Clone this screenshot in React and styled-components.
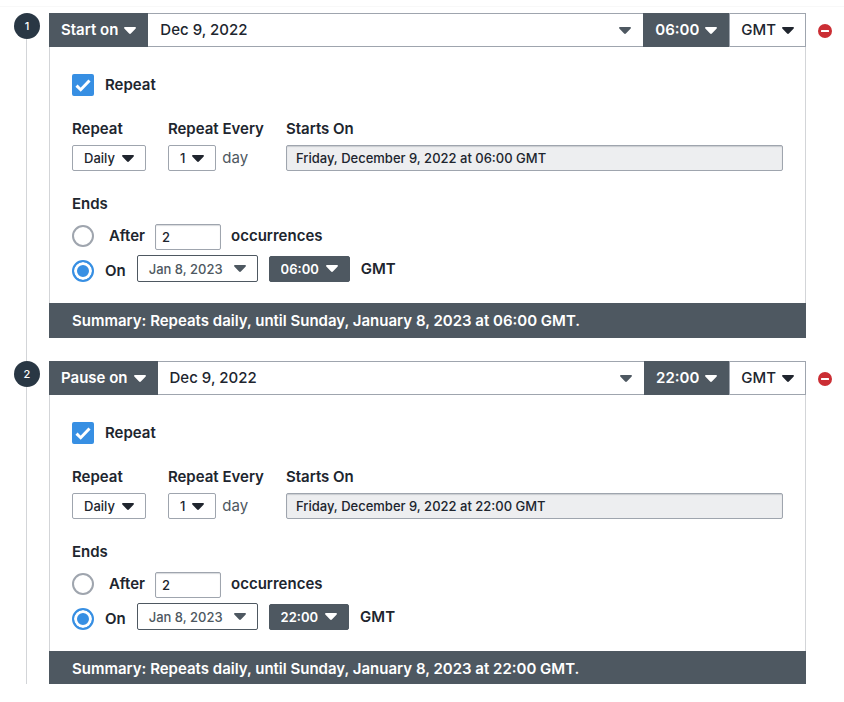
import React, { useId, useState } from "react";
import styled, { createGlobalStyle, css } from "styled-components";

const slate = "#4e5861";
const ink = "#20252e";
const line = "#9fa5ae";
const blue = "#378fe3";

const GlobalStyle = createGlobalStyle`
  *, *::before, *::after { box-sizing: border-box; }
  body {
    margin: 0;
    background: #fff;
    color: ${ink};
    font-family: Inter, "Liberation Sans", sans-serif;
    font-size: 15px;
    font-weight: 600;
    line-height: 22px;
  }
  button, input, select { font: inherit; color: inherit; margin: 0; }
`;

const Page = styled.main`
  height: calc(100vh - 18px);
  padding-top: 6px;
  overflow: hidden;
`;

const Steps = styled.ol`
  list-style: none;
  margin: 0;
  padding: 6px 12px 0 14px;
  border-top: 1px solid #f8f8f8;
`;

const StepItem = styled.li`
  display: flex;
`;

const Rail = styled.div`
  display: flex;
  flex-direction: column;
  align-items: center;
  width: 26px;
  margin-right: 9px;

  &::after {
    content: "";
    flex: 1;
    width: 1px;
    margin-right: 1px;
    background: #d3d5d8;
  }
`;

const StepNumber = styled.span`
  width: 26px;
  height: 26px;
  border-radius: 50%;
  background: #293744;
  color: #fff;
  font-size: 11px;
  font-weight: 500;
  line-height: 26px;
  text-align: center;
`;

const Card = styled.section`
  flex: 1;
  min-width: 0;
  margin-bottom: 23px;
`;

const Header = styled.div`
  display: flex;
  height: 34px;
`;

const tones = {
  dark: css`
    background: ${slate};
    border-color: ${slate};
    color: #fff;
  `,
  light: css`
    background: #fff;
    border-color: ${line};
    color: ${ink};
  `,
  outline: css`
    background: #fff;
    border-color: ${slate};
    color: ${slate};
  `,
};

const SelectWrap = styled.span`
  display: inline-grid;
  align-items: center;
  flex: none;
  color: ${(p) => (p.$tone === "dark" ? "#fff" : ink)};

  > * { grid-area: 1 / 1; }
  > svg { justify-self: end; margin-right: 12px; pointer-events: none; }
`;

const NativeSelect = styled.select`
  appearance: none;
  field-sizing: content;
  height: ${(p) => (p.$large ? 34 : 26)}px;
  padding: 0 ${(p) => (p.$large ? 29 : 30)}px 0 11px;
  border: 1px solid;
  border-radius: ${(p) => (p.$large ? "0" : "2px")};
  font-size: ${(p) => (p.$large ? 15 : 13)}px;
  font-weight: ${(p) => (p.$tone === "dark" ? 600 : 500)};
  cursor: pointer;
  ${(p) => tones[p.$tone]}
`;

const DateButton = styled.button`
  display: flex;
  align-items: center;
  justify-content: space-between;
  gap: 11px;
  height: ${(p) => (p.$large ? 34 : 27)}px;
  flex: ${(p) => (p.$large ? 1 : "none")};
  padding: 0 ${(p) => (p.$large ? 12 : 11)}px;
  border: 1px solid;
  border-radius: ${(p) => (p.$large ? "0" : "2px")};
  font-size: ${(p) => (p.$large ? 15 : 13)}px;
  font-weight: 500;
  cursor: pointer;
  ${(p) => tones[p.$large ? "light" : "outline"]}
  ${(p) => p.$large && "border-left: 0; border-right: 0;"}

  svg { color: ${slate}; }
`;

const CaretSvg = styled.svg`
  display: block;
  flex: none;
  width: 12px;
  height: 7px;
  fill: currentColor;
`;

const Body = styled.div`
  padding: 27px 22px 21px;
  border: solid #d3d5d8;
  border-width: 0 1px;
`;

const Check = styled.label`
  display: flex;
  align-items: center;
  gap: 11px;
  width: fit-content;
`;

const BoxWrap = styled.span`
  display: grid;
  width: 22px;
  height: 22px;

  > * { grid-area: 1 / 1; }
  svg { pointer-events: none; visibility: hidden; }
  input:checked + svg { visibility: visible; }
`;

const Checkbox = styled.input`
  appearance: none;
  width: 22px;
  height: 22px;
  border: 2px solid ${line};
  border-radius: 2px;

  &:checked { background: ${blue}; border-color: ${blue}; }
`;

const Fields = styled.div`
  display: flex;
  gap: 22px;
  margin: 22px 0;
`;

const Field = styled.div`
  display: flex;
  flex-direction: column;
  align-items: flex-start;
  gap: 5px;
  flex: ${(p) => (p.$grow ? 1 : "none")};
`;

const Inline = styled.div`
  display: flex;
  align-items: center;
  gap: 6px;
`;

const Unit = styled.span`
  color: ${slate};
  font-weight: 400;
`;

const TextField = styled.input`
  width: ${(p) => (p.readOnly ? "100%" : "66px")};
  height: 26px;
  padding: 0 ${(p) => (p.readOnly ? 9 : 6)}px;
  border: 1px solid ${line};
  border-radius: 2px;
  background: ${(p) => (p.readOnly ? "#edeef0" : "#fff")};
  box-shadow: inset 0 1px 1px rgba(60, 70, 85, 0.2);
  font-size: 13px;
  font-weight: 500;
  outline: none;
`;

const Ends = styled.fieldset`
  display: flex;
  flex-direction: column;
  gap: 5px;
  min-width: 0;
  margin: 0;
  padding: 0;
  border: 0;
`;

const Legend = styled.legend`
  margin-bottom: 9px;
  padding: 0;
`;

const EndRow = styled.div`
  display: flex;
  align-items: ${(p) => (p.$wide ? "center" : "flex-start")};
  gap: ${(p) => (p.$wide ? 11 : 10)}px;
`;

const Choice = styled.label`
  display: flex;
  align-items: center;
  align-self: ${(p) => (p.$low ? "flex-end" : "flex-start")};
  gap: ${(p) => (p.$low ? 11 : 15)}px;
  height: ${(p) => (p.$low ? 22 : 24)}px;
`;

const Radio = styled.input`
  appearance: none;
  width: 22px;
  height: 22px;
  border: 2px solid ${line};
  border-radius: 50%;
  background: #fff;

  &:checked {
    border-color: ${blue};
    background: ${blue};
    box-shadow: inset 0 0 0 3px #fff;
  }
`;

const After = styled.span`
  line-height: 24px;
`;

const Summary = styled.p`
  margin: 0;
  padding: 7px 23px 6px;
  background: ${slate};
  color: #fff;
`;

const Remove = styled.button`
  display: block;
  flex: none;
  width: 14px;
  height: 14px;
  margin: 11px 0 0 12px;
  padding: 0;
  border: 0;
  background: none;
  cursor: pointer;

  svg { display: block; }
`;

const Caret = () => (
  <CaretSvg viewBox="0 0 12 7" aria-hidden="true">
    <path d="M.9 0h10.2c.8 0 1.1.9.6 1.4L6.9 6.5c-.5.6-1.3.6-1.8 0L.3 1.4C-.2.9.1 0 .9 0z" />
  </CaretSvg>
);

function Select({ label, options, value, tone = "light", large, id }) {
  const [current, setCurrent] = useState(value);
  return (
    <SelectWrap $tone={tone}>
      <NativeSelect
        id={id}
        aria-label={label}
        value={current}
        onChange={(e) => setCurrent(e.target.value)}
        $tone={tone}
        $large={large}
      >
        {options.map((o) => (
          <option key={o}>{o}</option>
        ))}
      </NativeSelect>
      <Caret />
    </SelectWrap>
  );
}

const times = ["06:00", "22:00"];

function Step({ number, action, time }) {
  const id = useId();
  const [repeat, setRepeat] = useState(true);
  const [end, setEnd] = useState("on");
  const [count, setCount] = useState("2");

  return (
    <StepItem>
      <Rail>
        <StepNumber>{number}</StepNumber>
      </Rail>
      <Card>
        <Header>
          <Select large tone="dark" label="Action" value={action} options={["Start on", "Pause on"]} />
          <DateButton type="button" $large>
            Dec 9, 2022
            <Caret />
          </DateButton>
          <Select large tone="dark" label="Time" value={time} options={times} />
          <Select large label="Time zone" value="GMT" options={["GMT"]} />
        </Header>
        <Body>
          <Check>
            <BoxWrap>
              <Checkbox type="checkbox" checked={repeat} onChange={(e) => setRepeat(e.target.checked)} />
              <svg viewBox="0 0 22 22" width="22" height="22" aria-hidden="true">
                <path d="M4.5 11.6l4.2 4.1 8.8-9.2" fill="none" stroke="#fff" strokeWidth="3" />
              </svg>
            </BoxWrap>
            Repeat
          </Check>
          <Fields>
            <Field>
              <label htmlFor={id + "unit"}>Repeat</label>
              <Select id={id + "unit"} value="Daily" options={["Daily", "Weekly"]} />
            </Field>
            <Field>
              <label htmlFor={id + "every"}>Repeat Every</label>
              <Inline>
                <Select id={id + "every"} value="1" options={["1", "2", "3"]} />
                <Unit>day</Unit>
              </Inline>
            </Field>
            <Field $grow>
              <label htmlFor={id + "starts"}>Starts On</label>
              <TextField id={id + "starts"} readOnly value={`Friday, December 9, 2022 at ${time} GMT`} />
            </Field>
          </Fields>
          <Ends>
            <Legend>Ends</Legend>
            <EndRow>
              <Choice>
                <Radio type="radio" name={id + "end"} checked={end === "after"} onChange={() => setEnd("after")} />
                After
              </Choice>
              <TextField
                aria-label="Number of occurrences"
                inputMode="numeric"
                value={count}
                onChange={(e) => setCount(e.target.value)}
              />
              <After>occurrences</After>
            </EndRow>
            <EndRow $wide>
              <Choice $low>
                <Radio type="radio" name={id + "end"} checked={end === "on"} onChange={() => setEnd("on")} />
                On
              </Choice>
              <DateButton type="button">
                Jan 8, 2023
                <Caret />
              </DateButton>
              <Select tone="dark" label="End time" value={time} options={times} />
              <span>GMT</span>
            </EndRow>
          </Ends>
        </Body>
        <Summary>Summary: Repeats daily, until Sunday, January 8, 2023 at {time} GMT.</Summary>
      </Card>
      <Remove type="button" aria-label={`Remove step ${number}`}>
        <svg viewBox="0 0 14 14" width="14" height="14" aria-hidden="true">
          <circle cx="7" cy="7" r="7" fill="#cb2e34" />
          <rect x="3" y="6" width="8" height="2" rx="0.5" fill="#fff" />
        </svg>
      </Remove>
    </StepItem>
  );
}

export default function App() {
  return (
    <>
      <GlobalStyle />
      <Page>
        <Steps>
          <Step number={1} action="Start on" time="06:00" />
          <Step number={2} action="Pause on" time="22:00" />
        </Steps>
      </Page>
    </>
  );
}
